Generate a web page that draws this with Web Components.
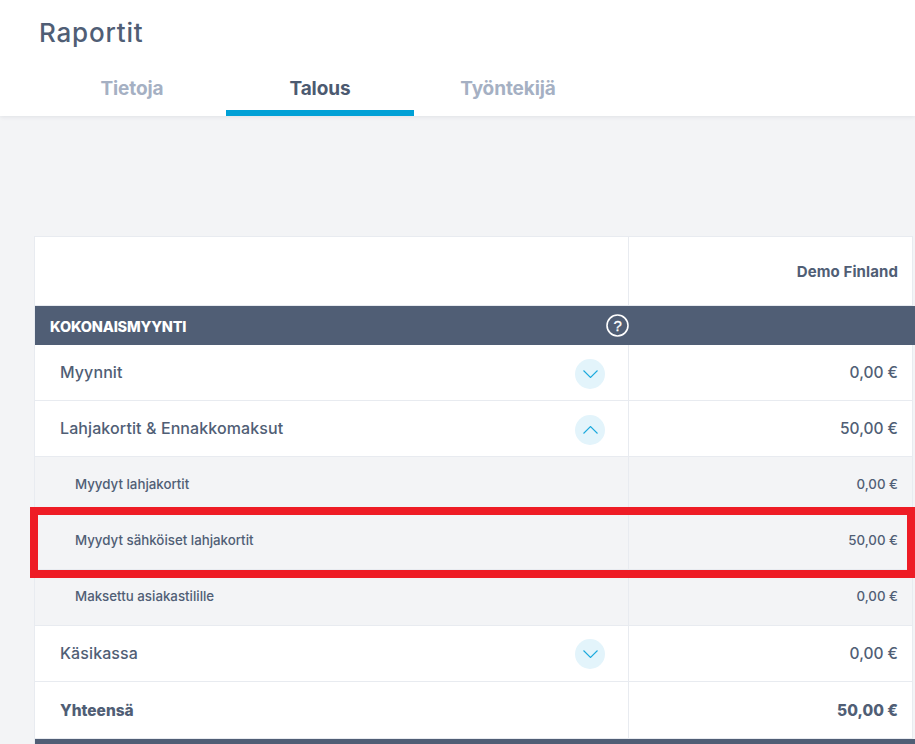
<!DOCTYPE html>
<html lang="fi"><head><meta charset="utf-8"><title>Raportit</title>
<style>
html,body{margin:0;height:744px;overflow:hidden;background:#f3f4f6;font-family:Inter,"Noto Sans",sans-serif;color:#505e75}
</style></head><body>
<report-page>
  <report-header slot="header" title="Raportit">
    <report-tab>Tietoja</report-tab>
    <report-tab active>Talous</report-tab>
    <report-tab>Työntekijä</report-tab>
  </report-header>
  <report-table>
    <report-row kind="head" value="Demo Finland"></report-row>
    <report-row kind="section" help>KOKONAISMYYNTI</report-row>
    <report-row toggle="down" value="0,00 €">Myynnit</report-row>
    <report-row toggle="up" value="50,00 €">Lahjakortit &amp; Ennakkomaksut</report-row>
    <report-row kind="sub" value="0,00 €">Myydyt lahjakortit</report-row>
    <report-row kind="sub" highlight value="50,00 €">Myydyt sähköiset lahjakortit</report-row>
    <report-row kind="sub" value="0,00 €">Maksettu asiakastilille</report-row>
    <report-row toggle="down" value="0,00 €">Käsikassa</report-row>
    <report-row kind="total" value="50,00 €">Yhteensä</report-row>
    <report-row kind="section"></report-row>
  </report-table>
</report-page>
<script>
function def(name, css, html){
  customElements.define(name, class extends HTMLElement{
    connectedCallback(){
      if(this.shadowRoot) return;
      const r=this.attachShadow({mode:'open'});
      r.innerHTML='<style>'+css+'</style>'+(typeof html==='function'?html(this):html);
    }
  });
}
def('report-page',':host{display:block}.body{display:block;padding:120px 0 0 34px}',
 '<slot name="header"></slot><div class="body"><slot></slot></div>');
def('report-header',`:host{display:block;height:116px;background:#fff;box-shadow:0 1px 4px rgba(60,70,90,.1);box-sizing:border-box;padding:16px 0 0 39px}
 h1{margin:0;font:500 26px/34px Inter,"Noto Sans",sans-serif;color:#505e75;letter-spacing:.8px}
 nav{display:flex;margin:15px 0 0 -1px}`,
 h=>`<h1>${h.getAttribute('title')}</h1><nav><slot></slot></nav>`);
def('report-tab',`:host{display:flex;justify-content:center;width:188px;height:51px;box-sizing:border-box;padding-top:12px;font:700 19px/24px Inter,"Noto Sans",sans-serif;color:#a5b0c3;letter-spacing:-.1px}
 :host([active]){color:#4c5a70;border-bottom:6px solid #00a0d6}`,'<slot></slot>');
def('report-table',':host{display:block;border-top:1px solid #e8ebf0;border-left:1px solid #e8ebf0;border-right:1px solid #e8ebf0;width:879px;box-sizing:border-box}','<slot></slot>');
const chev={down:'M.5 .5l7 7 7-7',up:'M.5 7.5l7-7 7 7'};
def('report-row',`:host{display:grid;grid-template-columns:594px 1fr;height:56px;position:relative;background:#fff;font-size:16px;font-weight:500;letter-spacing:.1px;color:#505e75;box-shadow:inset 0 -1px 0 #e8ebf0}
 .l{display:flex;align-items:center;justify-content:space-between;padding:0 23px 2px 25px;border-right:1px solid #e8ebf0;min-width:0}
 .r{display:flex;align-items:center;justify-content:flex-end;padding:0 14px 1px 0;font-size:15.5px;letter-spacing:0;white-space:nowrap}
 .tog{width:30px;height:30px;border-radius:50%;background:#e3f4fb;display:flex;align-items:center;justify-content:center;margin-top:3px}
 .q{width:23px;height:23px;display:block;margin-top:-2px;font-family:"Liberation Sans",sans-serif}
 :host([kind=head]){height:69px}
 :host([kind=head]) .r{font-weight:700;font-size:15px;letter-spacing:.1px}
 :host([kind=section]){height:39px;background:#505e75;color:#fff;font-weight:800;font-size:14.5px;box-shadow:none;letter-spacing:-.2px;margin-right:-3px}
 :host([kind=section]) .l{border-right:0;padding:1px 0 0 15px}
 :host([kind=sub]){height:56.34px;background:#f3f4f6;font-size:13.3px;letter-spacing:0}
 :host([kind=sub]) .l{padding:0 23px 3px 40px}
 :host([kind=sub]) .r{font-size:13.3px;padding-bottom:3px}
 :host([kind=total]){height:57px;font-weight:800;font-size:15.5px;letter-spacing:0}
 :host([kind=total]) .l,:host([kind=total]) .r{padding-bottom:0}
 :host([highlight]){z-index:1}
 :host([highlight])::after{content:"";box-sizing:border-box;position:absolute;top:-6.34px;left:-5px;right:-3px;height:71px;border:8px solid #ee1c25;pointer-events:none}`,
 h=>{
  const t=h.getAttribute('toggle');
  const tog=t?`<span class="tog"><svg width="15" height="8" viewBox="0 0 15 8" fill="none" stroke="#1aa9dd" stroke-width="1.1"><path d="${chev[t]}"/></svg></span>`:'';
  const q=h.hasAttribute('help')?`<svg class="q" viewBox="0 0 23 23"><circle cx="11.5" cy="11.5" r="10.5" fill="none" stroke="#fff" stroke-width="1.6"/><text x="11.5" y="16.8" text-anchor="middle" font-size="15" font-weight="400" fill="#fff" stroke="#fff" stroke-width=".3">?</text></svg>`:'';
  const v=h.getAttribute('value');
  return `<div class="l"><span><slot></slot></span>${tog}${q}</div><div class="r">${v||''}</div>`;
 });
</script>
</body></html>
